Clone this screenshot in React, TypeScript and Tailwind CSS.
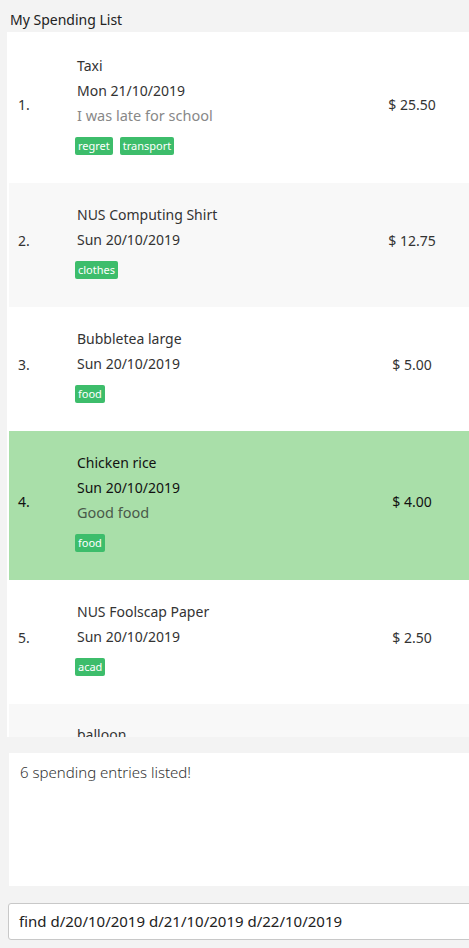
import React from "react";

interface Spending {
  id: number;
  name: string;
  date: string;
  remark?: string;
  tags: string[];
  amount: string;
}

const entries: Spending[] = [
  { id: 1, name: "Taxi", date: "Mon 21/10/2019", remark: "I was late for school", tags: ["regret", "transport"], amount: "$ 25.50" },
  { id: 2, name: "NUS Computing Shirt", date: "Sun 20/10/2019", tags: ["clothes"], amount: "$ 12.75" },
  { id: 3, name: "Bubbletea large", date: "Sun 20/10/2019", tags: ["food"], amount: "$ 5.00" },
  { id: 4, name: "Chicken rice", date: "Sun 20/10/2019", remark: "Good food", tags: ["food"], amount: "$ 4.00" },
  { id: 5, name: "NUS Foolscap Paper", date: "Sun 20/10/2019", tags: ["acad"], amount: "$ 2.50" },
];

const SELECTED = 4;

const SpendingCard = ({ item }: { item: Spending }) => {
  const selected = item.id === SELECTED;
  const bg = selected ? "bg-[#a9dfa9]" : item.id % 2 === 0 ? "bg-[#f8f8f8]" : "bg-white";
  const main = selected ? "text-[#111]" : "text-[#333]";
  return (
    <div className={`flex items-center pt-[19px] pb-[28px] ${bg}`}>
      <div className={`w-[68px] pl-[9px] text-[14px] ${main}`}>{item.id}.</div>
      <div className="flex-1 flex flex-col">
        <div className={`h-[25px] leading-[25px] text-[14px] ${main}`}>{item.name}</div>
        <div className={`h-[25px] leading-[25px] text-[14px] ${main}`}>{item.date}</div>
        {item.remark && (
          <div className={`h-[25px] leading-[25px] text-[14.5px] ${selected ? "text-[#4a5a4a]" : "text-[#888]"}`}>{item.remark}</div>
        )}
        <div className="flex gap-[7px] mt-[9px] -ml-[2px]">
          {item.tags.map((t) => (
            <span key={t} className="h-[18px] leading-[18px] px-[3px] rounded-[2px] bg-[#3dbd6b] text-white text-[11px]">
              {t}
            </span>
          ))}
        </div>
      </div>
      <div className={`w-[96px] mr-[38px] text-center text-[14px] ${main}`}>{item.amount}</div>
    </div>
  );
};

export default function App() {
  return (
    <div className="w-[469px] h-[948px] overflow-hidden bg-[#f3f3f3]" style={{ fontFamily: '"Noto Sans", "Open Sans", sans-serif' }}>
      <div className="w-[500px] flex flex-col">
        <div className="h-[32px] pl-[10px] pt-[9px] text-[14px] leading-[22px] text-[#222]">My Spending List</div>

        {/* list panel */}
        <div className="ml-[7px] h-[705px] bg-white p-[2px] overflow-hidden">
          <div className="flex flex-col">
            {entries.map((e) => (
              <SpendingCard key={e.id} item={e} />
            ))}
            {/* 6th entry, scrolled mostly out of view */}
            <div className="h-[60px] bg-[#f8f8f8] pt-[18px] pl-[68px] text-[14px] leading-[25px] text-[#333]">balloon</div>
          </div>
        </div>

        {/* result box */}
        <div className="mt-[16px] ml-[9px] h-[133px] bg-white pt-[9px]">
          <p className="ml-[11px] text-[15px] leading-[20px] font-light text-[#333]">6 spending entries listed!</p>
        </div>

        {/* command box */}
        <div className="mt-[17px] ml-[8px] h-[37px] bg-white border border-[#c8c8c8] rounded-[3px] pl-[10px] flex items-center text-[15px] text-[#222]">
          find d/20/10/2019 d/21/10/2019 d/22/10/2019
        </div>
      </div>
    </div>
  );
}
